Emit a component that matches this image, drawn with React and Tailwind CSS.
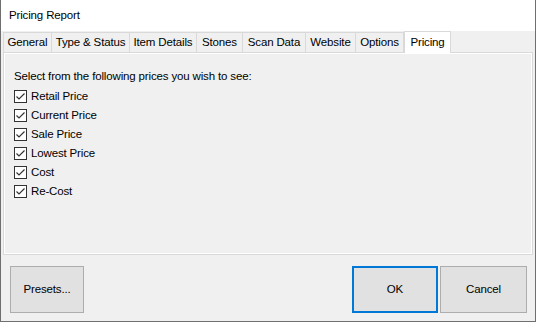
const tabs = [
  { label: 'General', w: 'w-[49px]' },
  { label: 'Type & Status', w: 'w-[79px]' },
  { label: 'Item Details', w: 'w-[68px]' },
  { label: 'Stones', w: 'w-[47px]' },
  { label: 'Scan Data', w: 'w-[64px]' },
  { label: 'Website', w: 'w-[51px]' },
  { label: 'Options', w: 'w-[49px]' },
];

const prices = ['Retail Price', 'Current Price', 'Sale Price', 'Lowest Price', 'Cost', 'Re-Cost'];

const Check = ({ label }) => (
  <label className="flex items-center h-[19px]">
    <span className="w-[13px] h-[13px] border border-[#333333] bg-white flex items-center justify-center">
      <svg width="11" height="11" viewBox="0 0 11 11">
        <path d="M1.5 5.5 L4 8 L9.5 2.5" fill="none" stroke="#333333" strokeWidth="1.2" />
      </svg>
    </span>
    <span className="ml-[4px]">{label}</span>
  </label>
);

export default function App() {
  return (
    <div
      className="w-[536px] h-[322px] flex flex-col bg-[#f0f0f0] border-l border-r border-b border-[#6f6f6f] text-[11.5px] tracking-[-0.15px] text-black"
      style={{ fontFamily: '"Liberation Sans", Arial, sans-serif' }}
    >
      {/* title bar */}
      <div className="h-[31px] bg-white flex items-center pl-[8px]">Pricing Report</div>

      {/* tabs */}
      <div className="flex items-end h-[21px] pl-[2px] relative z-10">
        {tabs.map((t) => (
          <div
            key={t.label}
            className={`${t.w} h-[20px] -mr-px border border-b-0 border-[#d9d9d9] bg-[#f0f0f0] flex items-center justify-center`}
          >
            {t.label}
          </div>
        ))}
        <div className="w-[47px] h-[22px] -mb-px ml-px border border-b-0 border-[#d9d9d9] bg-white flex items-start pt-[2px] justify-center">
          Pricing
        </div>
      </div>

      {/* tab page */}
      <div className="mx-[2px] h-[203px] border border-[#d9d9d9]">
        <div className="h-full border border-white pl-[9px] pt-[15px]">
          <div className="mb-[4px] leading-[14px]">Select from the following prices you wish to see:</div>
          {prices.map((p) => (
            <Check key={p} label={p} />
          ))}
        </div>
      </div>

      {/* buttons */}
      <div className="flex items-start pt-[11px] pl-[9px] pr-[8px]">
        <button className="w-[74px] h-[47px] border border-[#adadad] bg-[#e1e1e1]">Presets...</button>
        <div className="flex-1" />
        <button className="w-[86px] h-[47px] border-2 border-[#0078d7] bg-[#e1e1e1]">OK</button>
        <button className="w-[87px] h-[47px] ml-[2px] border border-[#adadad] bg-[#e1e1e1]">Cancel</button>
      </div>
    </div>
  );
}
